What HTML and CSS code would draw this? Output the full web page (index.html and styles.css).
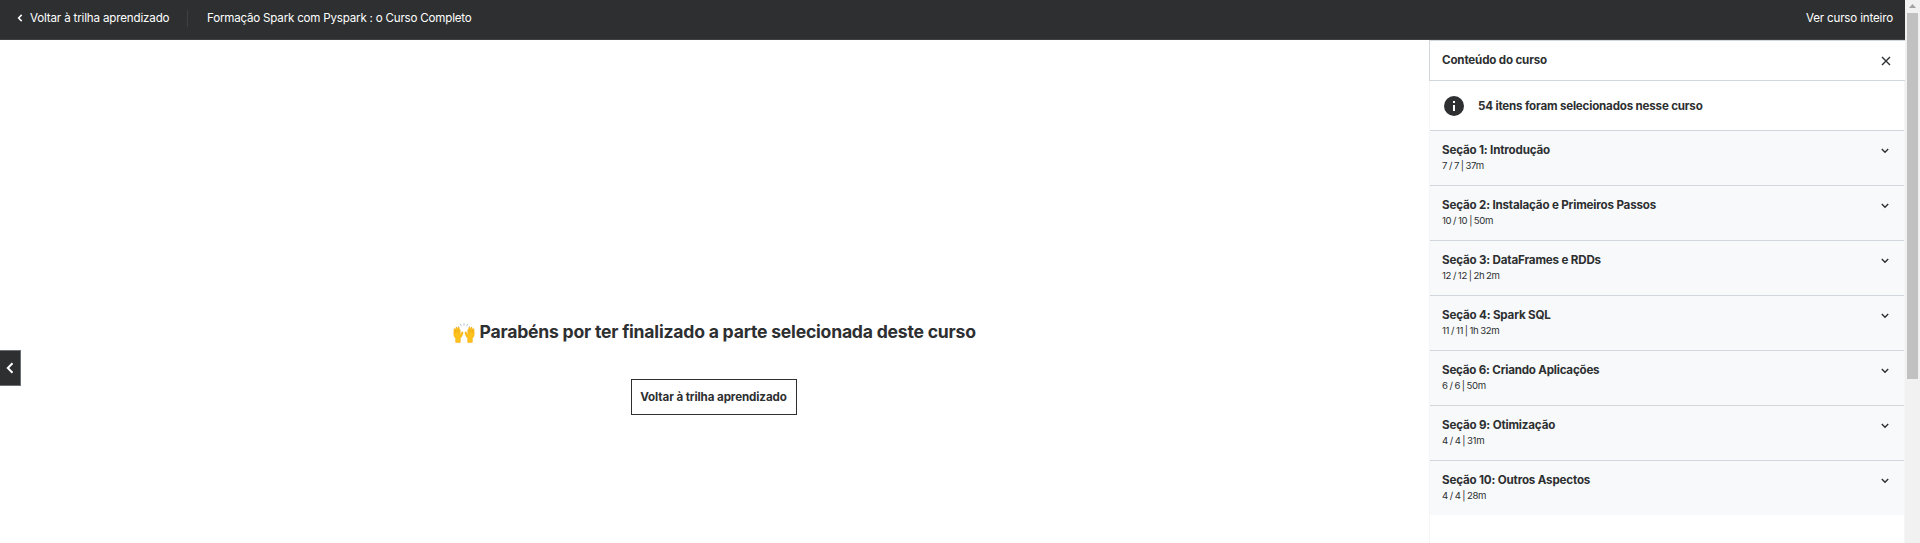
FILE: index.html
```html
<!DOCTYPE html>
<html lang="pt-BR">
<head>
<meta charset="utf-8">
<title>Formação Spark com Pyspark : o Curso Completo</title>
<link rel="stylesheet" href="styles.css">
</head>
<body>
<div class="app">
  <header class="topbar">
    <a class="back"><svg class="back-icon" viewBox="0 0 6 8"><path d="M4.7.9 1.6 4l3.1 3.1"/></svg><span class="t-back">Voltar à trilha aprendizado</span></a>
    <span class="divider"></span>
    <span class="t-course">Formação Spark com Pyspark : o Curso Completo</span>
    <a class="full">Ver curso inteiro</a>
  </header>
  <div class="content">
    <main class="stage">
      <button class="prev" aria-label="Anterior"><svg viewBox="0 0 8 12"><path d="M6.5 1.2 1.8 6l4.7 4.8"/></svg></button>
      <div class="done">
        <h1 class="headline">
          <svg class="hands" viewBox="0 0 22 21">
            <g class="rays"><path d="M11 1v3M7.2 1.7l1.3 2.6M14.8 1.7l-1.3 2.6M5 4.2l1.3 1M17 4.2l-1.3 1"/></g>
            <path class="hand" d="M2.6 20.5v-4C1.4 15.2.6 13.3.7 11.4L1 7.2c.1-.8.9-.8 1.1-.1l.2.9.7-2.5c.3-.8 1.2-.6 1.2.2L4.3 7l.9-1.4c.4-.6 1.3-.3 1.2.5l-.2 1.6c.5-.5 1.3-.1 1.2.6L7 12.5l1.6-2.2c.5-.8 1.7-.4 1.5.6-.3 1.9-1.4 4-2.7 5.4v4.2z"/>
            <path class="hand" d="M19.4 20.5v-4c1.2-1.3 2-3.2 1.9-5.1L21 7.2c-.1-.8-.9-.8-1.1-.1l-.2.9-.7-2.5c-.3-.8-1.2-.6-1.2.2L17.7 7l-.9-1.4c-.4-.6-1.3-.3-1.2.5l.2 1.6c-.5-.5-1.3-.1-1.2.6l.4 4.2-1.6-2.2c-.5-.8-1.7-.4-1.5.6.3 1.900 1.400 4 2.700 5.400v4.200z"/>
            <path class="crease" d="M2.500 8v3M4.200 7.300v3M6 7.800v3M19.500 8v3M17.800 7.300v3M16 7.800v3"/>
          </svg>
          <span>Parabéns por ter finalizado a parte selecionada deste curso</span>
        </h1>
        <button class="return">Voltar à trilha aprendizado</button>
      </div>
    </main>
    <aside class="panel">
      <div class="panel-head"><h2>Conteúdo do curso</h2><svg class="close" viewBox="0 0 10 10"><path d="m1 1 8 8M9 1 1 9"/></svg></div>
      <div class="panel-body">
        <div class="info"><svg class="info-icon" viewBox="0 0 20 20"><circle cx="10" cy="10" r="10"/><path d="M9 5h2v2H9zM9 9h2v6H9z"/></svg><span>54 itens foram selecionados nesse curso</span></div>
        <section class="section"><div><h3>Seção 1: Introdução</h3><p>7 / 7 | 37m</p></div><svg class="chev" viewBox="0 0 8 6"><path d="m.8 1 3.200 3.200L7.200 1"/></svg></section>
        <section class="section"><div><h3>Seção 2: Instalação e Primeiros Passos</h3><p>10 / 10 | 50m</p></div><svg class="chev" viewBox="0 0 8 6"><path d="m.8 1 3.200 3.200L7.200 1"/></svg></section>
        <section class="section"><div><h3>Seção 3: DataFrames e RDDs</h3><p>12 / 12 | 2h 2m</p></div><svg class="chev" viewBox="0 0 8 6"><path d="m.8 1 3.200 3.200L7.200 1"/></svg></section>
        <section class="section"><div><h3>Seção 4: Spark SQL</h3><p>11 / 11 | 1h 32m</p></div><svg class="chev" viewBox="0 0 8 6"><path d="m.8 1 3.200 3.200L7.200 1"/></svg></section>
        <section class="section"><div><h3 class="tight">Seção 6: Criando Aplicações</h3><p>6 / 6 | 50m</p></div><svg class="chev" viewBox="0 0 8 6"><path d="m.8 1 3.200 3.200L7.200 1"/></svg></section>
        <section class="section"><div><h3>Seção 9: Otimização</h3><p>4 / 4 | 31m</p></div><svg class="chev" viewBox="0 0 8 6"><path d="m.8 1 3.200 3.200L7.200 1"/></svg></section>
        <section class="section"><div><h3>Seção 10: Outros Aspectos</h3><p>4 / 4 | 28m</p></div><svg class="chev" viewBox="0 0 8 6"><path d="m.8 1 3.200 3.200L7.200 1"/></svg></section>
      </div>
    </aside>
  </div>
</div>
<div class="scrollbar"><svg class="arrow" viewBox="0 0 7 4"><path d="M0 4 3.500 0 7 4z"/></svg><div class="thumb"></div></div>
</body>
</html>
```
FILE: styles.css
```css
* { box-sizing: border-box; }
body { margin: 0; height: 543px; overflow: hidden; display: flex; background: #fff; color: #2d2f31; font-family: Inter, "Liberation Sans", sans-serif; font-size: 11.6px; line-height: 16px; letter-spacing: -.17px; }
h1, h2, h3, p { margin: 0; font-size: inherit; }
button { font: inherit; color: inherit; padding: 0; border-radius: 0; }
svg { display: block; flex: none; fill: none; }
span, h2, h3, p { white-space: nowrap; }
.app { width: 1905px; height: 543px; display: flex; flex-direction: column; }
.topbar { height: 40px; flex: none; display: flex; align-items: center; padding: 0 12px 3px 17px; background: #2d2f31; border-bottom: 1px solid #3e4143; color: #fff; }
.back { display: flex; align-items: center; width: 170px; gap: 7px; }
.back-icon { width: 6px; height: 8px; stroke: #fff; stroke-width: 1.5; }
.divider { width: 1px; height: 17px; background: #3e4143; margin-right: 19px; }
.t-course { letter-spacing: -.21px; }
.full { margin-left: auto; letter-spacing: -.17px; }
.content { flex: 1; display: flex; min-height: 0; }
.stage { width: 1429px; display: flex; }
.prev { width: 21px; height: 36px; margin-top: 310px; background: #2d2f31; border: 1px solid #6a6f73; border-left: 0; display: grid; place-items: center; }
.prev svg { width: 8px; height: 12px; margin-right: 1px; stroke: #fff; stroke-width: 2; }
.done { flex: 1; padding: 280px 23px 0 0; display: flex; flex-direction: column; align-items: center; }
.headline { display: flex; align-items: center; height: 24px; width: 522px; gap: 5px; font-size: 17.6px; font-weight: 700; letter-spacing: -.22px; }
.hands { width: 22px; height: 21px; }
.hand { fill: #fcc21b; stroke: #f3a719; stroke-width: .4; }
.crease { stroke: #ef9a15; stroke-width: .5; }
.rays { stroke: #b4c3ca; stroke-width: .9; }
.return { width: 166px; height: 36px; margin-top: 35px; background: #fff; border: 1px solid #2d2f31; font-weight: 700; letter-spacing: -.1px; }
.panel { width: 476px; display: flex; flex-direction: column; }
.panel-head { height: 41px; flex: none; display: flex; align-items: center; justify-content: space-between; padding: 0 14px 1px 12px; border: 1px solid #d1d7dc; border-right: 0; }
.close { width: 10px; height: 10px; margin-top: 1px; stroke: #2d2f31; stroke-width: 1.4; }
.panel-body { flex: 1; border-left: 1px solid #f3f5f7; border-right: 1px solid #f3f5f7; }
.info { height: 49px; display: flex; align-items: center; gap: 14px; padding: 1px 14px 0; font-weight: 700; letter-spacing: -.19px; }
.info-icon { width: 20px; height: 20px; fill: #2d2f31; }
.info-icon path { fill: #fff; }
.section { height: 55px; display: flex; justify-content: space-between; padding: 11px 15px 0 12px; background: #f7f9fa; border-top: 1px solid #d1d7dc; }
.tight { letter-spacing: -.21px; }
.section p { font-size: 9.600px; line-height: 16px; letter-spacing: -.35px; word-spacing: -.5px; }
.chev { width: 8px; height: 6px; margin-top: 6px; stroke: #2d2f31; stroke-width: 1.4; }
.scrollbar { width: 15px; background: #f1f1f1; display: flex; flex-direction: column; align-items: center; padding-top: 4px; }
.arrow { width: 7px; height: 4px; fill: #a3a3a3; }
.thumb { width: 11px; height: 366px; margin-top: 5px; background: #c1c1c1; }
```
